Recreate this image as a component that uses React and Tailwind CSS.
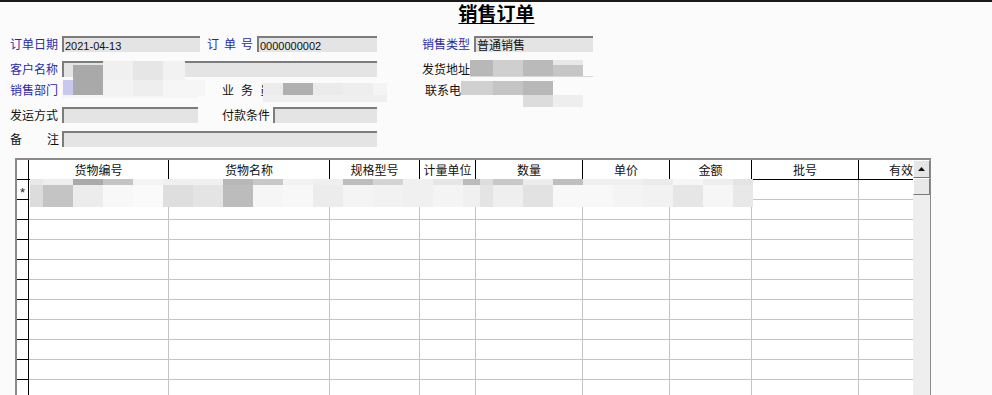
import React from 'react';

const cjk = '"Noto Sans CJK SC", "Noto Sans", sans-serif';

const columns = [
    { key: 'code', title: '货物编号', width: 140 },
    { key: 'name', title: '货物名称', width: 161 },
    { key: 'spec', title: '规格型号', width: 90 },
    { key: 'unit', title: '计量单位', width: 56 },
    { key: 'qty', title: '数量', width: 107 },
    { key: 'price', title: '单价', width: 87 },
    { key: 'amount', title: '金额', width: 82 },
    { key: 'batch', title: '批号', width: 107 },
    { key: 'expiry', title: '有效', width: 54, align: 'end' },
];

// pixelated (masked) areas: [x, y, w, h, colour]
const mosaic = [
    [73, 65, 30, 30, '#a9a9a9'],
    [103, 61, 30, 19, '#f0f0f0'], [103, 80, 30, 16, '#f3f3f3'],
    [133, 61, 30, 19, '#e6e6e6'], [133, 80, 30, 16, '#eeeeee'],
    [163, 61, 22, 19, '#f2f2f2'], [163, 80, 42, 16, '#f6f6f6'],
    [63, 80, 10, 15, '#c8c8ee'],
    [263, 83, 20, 12, '#ececec'], [283, 83, 30, 12, '#b0b0b0'], [313, 83, 30, 12, '#ebebeb'],
    [343, 83, 30, 12, '#eeeeee'], [373, 83, 14, 12, '#f4f4f4'], [263, 95, 124, 7, '#efefef'],
    [470, 60, 23, 16, '#b8b8b8'], [493, 60, 30, 16, '#cfcfcf'], [523, 60, 30, 16, '#bababa'],
    [553, 60, 30, 5, '#e8e8e8'], [553, 65, 30, 11, '#c6c6c6'],
    [461, 81, 32, 14, '#d0d0d0'], [493, 81, 30, 14, '#c4c4c4'], [523, 81, 30, 14, '#b8b8b8'],
    [523, 95, 30, 12, '#dcdcdc'], [553, 95, 30, 12, '#eeeeee'],
];

const rowTop = ['#e8e8e8', '#eeeeee', '#aaaaaa', '#c4c4c4', '#f4f4f4', '#efefef', '#f0f0f0', '#b8b8b8', '#c8c8c8', '#f2f2f2', '#efefef', '#bdbdbd', '#d4d4d4', '#f0f0f0', '#e6e6e6', '#bbbbbb', '#dddddd', '#c8c8c8', '#ececec', '#bfbfbf', '#f0f0f0', '#f0f0f0', '#ebebeb', '#f6f6f6', '#eeeeee', '#e4e4e4', '#eeeeee'];
const rowMain = ['#dcdcdc', '#c4c4c4', '#ececec', '#f8f8f8', '#fafafa', '#dedede', '#e4e4e4', '#bcbcbc', '#f6f6f6', '#f8f8f8', '#ececec', '#f4f4f4', '#f2f2f2', '#f0f0f0', '#f4f4f4', '#f0f0f0', '#e4e4e4', '#efefef', '#e2e2e2', '#f8f8f8', '#f8f8f8', '#f4f4f4', '#f2f2f2', '#e6e6e6', '#f6f6f6', '#e8e8e8', '#dedede'];
const rowXs = [30, 43, 73, 103, 133, 163, 193, 223, 253, 283, 313, 343, 373, 403, 433, 463, 480, 493, 523, 553, 583, 613, 643, 673, 703, 733, 753];

function Label({ children, blue, className = '' }) {
    return (
        <span className={`text-[12px] leading-[16px] whitespace-nowrap ${blue ? 'text-[#2a2aae]' : 'text-[#111]'} ${className}`}>
            {children}
        </span>
    );
}

function Field({ width, value }) {
    return (
        <div
            className="h-[16px] bg-[#e4e4e4] border-t-2 border-l-2 border-t-[#7c7c7c] border-l-[#7c7c7c] text-[12px] leading-[13px] pl-[1px] text-[#111] overflow-hidden whitespace-nowrap"
            style={{ width }}
        >
            {value}
        </div>
    );
}

export default function App() {
    const rows = Array.from({ length: 12 });

    return (
        <div className="relative w-[992px] h-[395px] overflow-hidden bg-[#fbfbfb]" style={{ fontFamily: cjk }}>
            <div className="h-[2px] bg-[#1a1a1a]" />
            <div className="flex justify-center h-[24px] pl-[1px]">
                <span className="text-[19px] leading-[22px] font-bold underline underline-offset-[2px] text-black">销售订单</span>
            </div>

            <div className="pl-[10px] pt-[10px]">
                <div className="flex items-center h-[16px]">
                    <Label blue className="w-[52px]">订单日期</Label>
                    <Field width={138} value={<span className="font-['Liberation_Sans'] text-[11px]">2021-04-13</span>} />
                    <Label blue className="ml-[7px] w-[50px] tracking-[5px]">订单号</Label>
                    <Field width={120} value={<span className="font-['Liberation_Sans'] text-[11px]">0000000002</span>} />
                    <Label blue className="ml-[45px] w-[52px]">销售类型</Label>
                    <Field width={119} value="普通销售" />
                </div>

                <div className="flex items-center h-[16px] mt-[9px]">
                    <Label blue className="w-[52px]">客户名称</Label>
                    <Field width={315} value="" />
                    <Label className="ml-[45px] w-[48px]">发货地址</Label>
                    <div className="w-[123px] h-[16px] border-b border-[#d8d8d8]" />
                </div>

                <div className="flex items-center h-[16px] mt-[5px]">
                    <Label blue className="w-[52px]">销售部门</Label>
                    <div className="w-[136px] h-[16px] bg-[#f6f6f6]" />
                    <Label className="ml-[24px] w-[52px] tracking-[7px]">业务员</Label>
                    <div className="w-[151px]" />
                    <Label>联系电</Label>
                </div>

                <div className="flex items-center h-[16px] mt-[9px]">
                    <Label className="w-[52px]">发运方式</Label>
                    <Field width={136} value="" />
                    <Label className="ml-[24px] w-[51px]">付款条件</Label>
                    <Field width={104} value="" />
                </div>

                <div className="flex items-center h-[16px] mt-[8px]">
                    <div className="w-[52px] flex">
                        <Label className="w-[49px] flex justify-between">
                            <span>备</span>
                            <span>注</span>
                        </Label>
                    </div>
                    <Field width={315} value="" />
                </div>
            </div>

            <div className="ml-[15px] mt-[11px] w-[916px] flex border-l-2 border-t-2 border-r border-[#8a8a8a]">
                <div className="w-[896px] bg-white">
                    <div className="flex h-[20px] border-b border-black">
                        <div className="w-[12px] border-r border-black" />
                        {columns.map(col => (
                            <div
                                key={col.key}
                                className={`flex items-center text-[12px] text-[#111] overflow-hidden ${col.align === 'end' ? 'justify-end' : 'justify-center border-r border-black'}`}
                                style={{ width: col.width }}
                            >
                                {col.title}
                            </div>
                        ))}
                    </div>
                    {rows.map((_, i) => (
                        <div key={i} className="flex h-[20px] border-b border-[#c4c4c4]">
                            <div className="w-[12px] border-r border-black border-b border-b-black -mb-px flex items-center justify-center pt-[5px] text-[13px] leading-[13px] font-['Liberation_Sans'] text-[#222]">
                                {i === 0 ? '*' : ''}
                            </div>
                            {columns.map((col, c) => (
                                <div
                                    key={col.key}
                                    className={c < columns.length - 1 ? 'border-r border-[#c4c4c4]' : ''}
                                    style={{ width: col.width }}
                                />
                            ))}
                        </div>
                    ))}
                </div>

                <div className="w-[17px] flex flex-col bg-[#f1f1f1]">
                    <div className="h-[18px] bg-[#e6e6e6] border border-t-white border-l-white border-b-[#7a7a7a] border-r-[#7a7a7a] flex items-center justify-center">
                        <svg width="7" height="4" viewBox="0 0 7 4">
                            <path d="M0 4 L3.5 0 L7 4 Z" fill="#111" />
                        </svg>
                    </div>
                    <div className="h-[17px] bg-[#e8e8e8] border border-t-white border-l-white border-b-[#7a7a7a] border-r-[#7a7a7a]" />
                    <div className="flex-1 bg-[#eeeeee]" />
                </div>
            </div>

            {mosaic.map(([x, y, w, h, c], i) => (
                <div key={i} className="absolute" style={{ left: x, top: y, width: w, height: h, background: c }} />
            ))}
            {rowXs.slice(0, -1).map((x, i) => (
                <React.Fragment key={`r${i}`}>
                    <div className="absolute" style={{ left: x, top: 179, width: rowXs[i + 1] - x, height: 6, background: rowTop[i] }} />
                    <div className="absolute" style={{ left: x, top: 185, width: rowXs[i + 1] - x, height: 22, background: rowMain[i] }} />
                </React.Fragment>
            ))}
        </div>
    );
}
